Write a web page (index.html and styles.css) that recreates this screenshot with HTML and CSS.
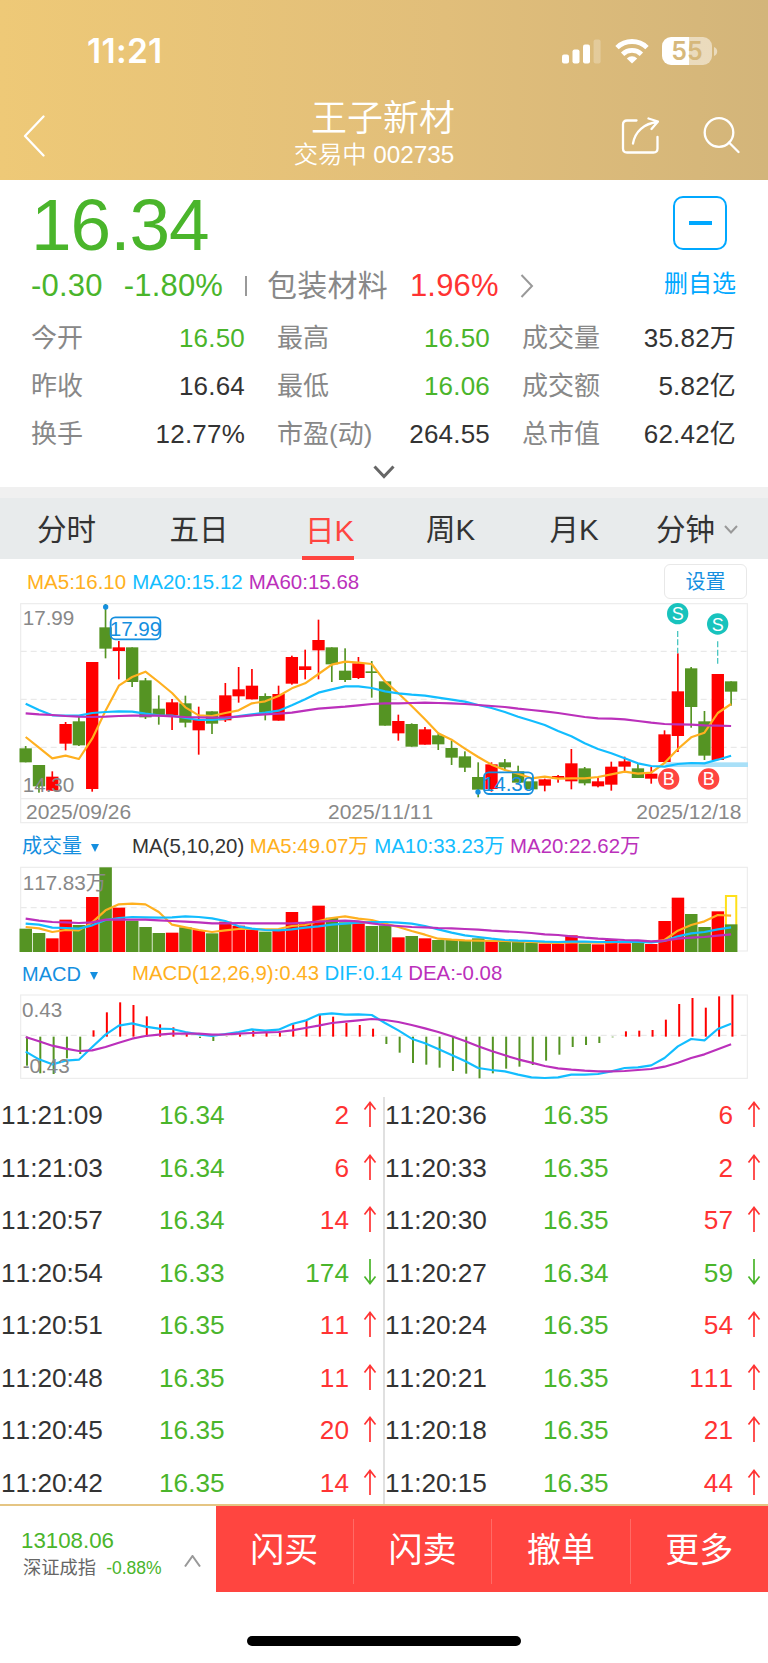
FILE: index.html
```html
<!DOCTYPE html>
<html lang="zh-CN">
<head>
  <meta charset="UTF-8">
  <meta name="viewport" content="width=device-width, initial-scale=1.0">
  <title>王子新材 002735</title>
  <link rel="stylesheet" href="styles.css">
</head>
<body>
  <header class="header">
    <div class="status">
      <span class="status__time">11:21</span>
      <div class="status__icons">
        <svg class="status__signal" width="40" height="25" viewBox="0 0 40 25" fill="#fff">
          <rect x="0" y="15.5" width="7" height="9" rx="2"/>
          <rect x="10.5" y="10.5" width="7" height="14" rx="2"/>
          <rect x="21" y="5.5" width="7" height="19" rx="2"/>
          <rect x="31.6" y="0.5" width="7" height="24" rx="2" opacity="0.25"/>
        </svg>
        <svg class="status__wifi" width="34" height="25" viewBox="0 0 34 25" fill="none" stroke="#fff" stroke-width="4.8">
          <path d="M2 8.6a21.5 21.5 0 0 1 30 0"/>
          <path d="M7.6 15.2a13.600 13.600 0 0 1 18.800 0"/>
          <path d="M17 24.600l-5.200-5.200a7.600 7.600 0 0 1 10.400 0z" fill="#fff" stroke="none"/>
        </svg>
        <div class="battery"><span>55</span></div>
        <svg class="battery-cap" width="4" height="9" viewBox="0 0 4 9"><path d="M0 0q3.200 1.200 3.200 4.500T0 9z" fill="#fff" opacity="0.5"/></svg>
      </div>
    </div>
    <nav class="nav">
      <svg class="nav__back" width="22" height="42" viewBox="0 0 22 42"><path d="M20.500 1.500L2 21l18.500 19.500"/></svg>
      <div class="nav__title">
        <h1>王子新材</h1>
        <p>交易中 002735</p>
      </div>
      <div class="nav__actions">
        <svg width="38" height="38" viewBox="0 0 38 38">
          <path d="M15.500 4.500H6Q2 4.500 2 8.500v24Q2 36.500 6 36.500h26.500Q36.500 36.500 36.500 32.500V21"/>
          <path d="M12 27.500C14 15.500 23 7.500 36.500 6M27.500 2.500l9.500 3L30.500 13"/>
        </svg>
        <svg width="38" height="38" viewBox="0 0 38 38">
          <circle cx="17" cy="16.500" r="14.300"/>
          <path d="M27 26.500l9.500 9.500"/>
        </svg>
      </div>
    </nav>
  </header>

  <section class="quote">
    <div class="quote__top">
      <div class="quote__main">
        <div class="quote__price">16.34</div>
        <div class="quote__change">
          <span class="green">-0.30</span>
          <span class="green quote__percent">-1.80%</span>
          <i class="quote__divider"></i>
          <span class="quote__sector">包装材料</span>
          <span class="red">1.96%</span>
          <svg width="14" height="24" viewBox="0 0 14 24"><path d="M1.500 1L12 12 1.500 23"/></svg>
        </div>
      </div>
      <div class="quote__remove">
        <div class="quote__minus"></div>
        <span>删自选</span>
      </div>
    </div>
    <div class="stats">
      <div class="stat"><span>今开</span><b class="green">16.50</b></div>
      <div class="stat"><span>最高</span><b class="green">16.50</b></div>
      <div class="stat"><span>成交量</span><b>35.82万</b></div>
      <div class="stat"><span>昨收</span><b>16.64</b></div>
      <div class="stat"><span>最低</span><b class="green">16.06</b></div>
      <div class="stat"><span>成交额</span><b>5.82亿</b></div>
      <div class="stat"><span>换手</span><b>12.77%</b></div>
      <div class="stat"><span>市盈(动)</span><b>264.55</b></div>
      <div class="stat"><span>总市值</span><b>62.42亿</b></div>
    </div>
    <svg class="quote__more" width="22" height="14" viewBox="0 0 22 14"><path d="M1.500 1.500L11 11.500l9.500-10"/></svg>
  </section>

  <div class="tabs">
    <div class="tab"><span>分时</span></div>
    <div class="tab"><span>五日</span></div>
    <div class="tab tab--active"><span>日K</span></div>
    <div class="tab"><span>周K</span></div>
    <div class="tab"><span>月K</span></div>
    <div class="tab"><span>分钟</span><svg width="14" height="9" viewBox="0 0 14 9"><path d="M1 1l6 6.500L13 1"/></svg></div>
  </div>

  <section class="charts">
    <div class="legend legend--price">
      <span class="ma-a">MA5:16.10</span>
      <span class="ma-b">MA20:15.12</span>
      <span class="ma-c">MA60:15.68</span>
      <button class="settings">设置</button>
    </div>
    <svg class="chart" id="price" width="728" height="220" viewBox="60 39 2184 660"></svg>

    <div class="legend legend--volume">
      <span class="legend__name">成交量<i></i></span>
      <span>MA(5,10,20)</span>
      <span class="ma-a">MA5:49.07万</span>
      <span class="ma-b">MA10:33.23万</span>
      <span class="ma-c">MA20:22.62万</span>
    </div>
    <svg class="chart" id="volume" width="728" height="86" viewBox="60 126 2184 258"></svg>

    <div class="legend legend--macd">
      <span class="legend__name">MACD<i></i></span>
      <span class="ma-a">MACD(12,26,9):0.43</span>
      <span class="ma-b">DIF:0.14</span>
      <span class="ma-c">DEA:-0.08</span>
    </div>
    <svg class="chart" id="macd" width="728" height="84" viewBox="60 510 2184 252"></svg>
  </section>

  <section class="ticks">
    <ul class="ticks__col" id="ticks-left"></ul>
    <ul class="ticks__col" id="ticks-right"></ul>
  </section>

  <footer class="footer">
    <div class="index">
      <div class="index__value green">13108.06</div>
      <div class="index__row">
        <span>深证成指</span>
        <span class="green index__percent">-0.88%</span>
      </div>
      <svg class="index__up" width="17" height="12" viewBox="0 0 17 12"><path d="M1 11.500L8.500 1 16 11.500"/></svg>
    </div>
    <div class="actions">
      <button>闪买</button>
      <button>闪卖</button>
      <button>撤单</button>
      <button>更多</button>
    </div>
  </footer>
  <div class="home-bar"></div>

  <script src="script.js"></script>
</body>
</html>
```

FILE: styles.css
```css
*,
*::after,
*::before {
  padding: 0;
  margin: 0;
  box-sizing: border-box;
}

:root {
  --green: #4ab52b;
  --red: #ff3333;
  --action: #ff4540;
  --blue: #00a8ff;
  --link: #158fdf;
  --text: #333;
  --muted: #888;
  --ma-a: #ffb020;
  --ma-b: #12bdff;
  --ma-c: #bb30bb;
}

body {
  width: 768px;
  height: 1663px;
  overflow: hidden;
  background-color: #fff;
  color: var(--text);
  font-family: "Liberation Sans", "Noto Sans CJK SC", sans-serif;
  font-kerning: none;
  line-height: 1.15;
}

svg {
  display: block;
  flex: none;
}

button {
  border: 0;
  background: none;
  font-family: inherit;
}

.green {
  color: var(--green);
}

.red {
  color: var(--red);
}

/* header */

.header {
  height: 180px;
  color: #fff;
  background-image: linear-gradient(to right, #eec977, #e1be7a 58%, #d3b57a);
}

.status {
  display: flex;
  justify-content: space-between;
  height: 90px;
  padding: 33px 50px 0 87px;
}

.status__time {
  font: 600 33.5px/37px Inter, sans-serif;
  letter-spacing: 0.3px;
}

.status__icons {
  display: flex;
  height: 36px;
  align-items: center;
}

.status__wifi {
  margin: 0 13px 0 13px;
}

.battery {
  width: 50px;
  height: 28px;
  border-radius: 9px;
  background-image: linear-gradient(to right, #fff 54%, rgba(255, 255, 255, 0.5) 54%);
  text-align: center;
}

.battery span {
  color: #d6b87b;
  font: 600 25px/28px Inter, sans-serif;
}

.battery-cap {
  margin-left: 2px;
}

.nav {
  display: grid;
  grid-template-columns: 200px 1fr 200px;
  height: 90px;
}

.nav svg {
  fill: none;
  stroke: #fff;
  stroke-width: 2.3;
  stroke-linecap: round;
  stroke-linejoin: round;
}

.nav__back {
  margin: 25px 0 0 23px;
}

.nav__title {
  padding-top: 6px;
  text-align: center;
}

.nav__title h1 {
  margin-left: -2px;
  font-size: 36px;
  font-weight: 350;
  line-height: 46px;
}

.nav__title p {
  margin-left: -20px;
  font-size: 24.3px;
  font-weight: 350;
  line-height: 26px;
}

.nav__actions {
  display: flex;
  justify-content: flex-end;
  gap: 43px;
  padding: 26px 28px 0 0;
}

/* quote */

.quote {
  height: 307px;
}

.quote__top {
  display: flex;
  justify-content: space-between;
  height: 134px;
  padding-left: 31px;
}

.quote__price {
  height: 82px;
  padding-top: 4px;
  color: var(--green);
  font-size: 73px;
  line-height: 82px;
  letter-spacing: -1px;
}

.quote__change {
  display: flex;
  align-items: center;
  height: 48px;
  font-size: 31px;
  letter-spacing: 0.2px;
}

.quote__percent {
  margin-left: 21px;
}

.quote__divider {
  width: 2px;
  height: 20px;
  margin: 0 20px 0 22px;
  background-color: #999;
}

.quote__sector {
  margin-right: 22px;
  color: var(--muted);
  font-size: 30px;
}

.quote__change svg {
  margin-left: 21px;
  fill: none;
  stroke: #999;
  stroke-width: 2;
}

.quote__remove {
  width: 136px;
  padding-top: 16px;
  color: var(--blue);
  text-align: center;
  font-size: 24px;
}

.quote__minus {
  display: flex;
  align-items: center;
  justify-content: center;
  width: 54px;
  height: 54px;
  margin: 0 auto 19px;
  border: 2px solid var(--blue);
  border-radius: 10px;
}

.quote__minus::after {
  content: "";
  width: 23px;
  height: 4px;
  background-color: var(--blue);
}

.quote__remove span {
  display: block;
  line-height: 30px;
}

.stats {
  display: grid;
  grid-template-columns: 214px 213px 214px;
  grid-auto-rows: 47.8px;
  column-gap: 32px;
  padding: 1px 0 0 31px;
}

.stat {
  display: flex;
  align-items: center;
  justify-content: space-between;
  font-size: 26px;
}

.stat span {
  color: var(--muted);
}

.stat b {
  font-weight: 400;
  letter-spacing: 0.2px;
}

.quote__more {
  margin: 7px auto 0;
  fill: none;
  stroke: #666;
  stroke-width: 3;
}

/* tabs */

.tabs {
  display: grid;
  grid-template-columns: 133px 132px 126px 119px 128px 118px;
  height: 72px;
  border-top: 11px solid #f0f0f0;
  background-color: #e8ebec;
}

.tab {
  display: flex;
  align-items: center;
  justify-content: center;
  gap: 9px;
  font-size: 29.5px;
}

.tab span {
  line-height: 63px;
}

.tab svg {
  fill: none;
  stroke: #999;
  stroke-width: 2;
}

.tab--active {
  color: var(--action);
}

.tab--active span {
  height: 61px;
  padding: 0 0 0 3px;
  line-height: 63px;
  border-bottom: 4px solid var(--action);
}

/* charts */

.charts {
  padding-left: 20px;
}

.legend {
  display: flex;
  align-items: center;
  gap: 5.5px;
  font-size: 20.4px;
}

.legend--price {
  height: 44px;
  padding-top: 1px;
  padding-left: 7px;
  font-size: 20.5px;
  gap: 6px;
}

.legend--volume {
  height: 44px;
  padding-top: 3px;
}

.legend--macd {
  height: 42px;
}

.legend__name {
  display: flex;
  align-items: center;
  gap: 9px;
  width: 106.5px;
  padding-left: 2px;
  color: var(--link);
  font-size: 20px;
}

.legend__name i {
  margin-top: 3px;
  border: solid transparent;
  border-width: 8px 4px 0;
  border-top-color: var(--link);
}

.ma-a {
  color: var(--ma-a);
}

.ma-b {
  color: var(--ma-b);
}

.ma-c {
  color: var(--ma-c);
}

.settings {
  width: 83px;
  height: 35px;
  margin: 0 21px 0 auto;
  border: 1px solid #e8e8e8;
  border-radius: 6px;
  color: var(--link);
  font-size: 20px;
  line-height: 35px;
}

.chart {
  overflow: visible;
}

.chart .frame {
  fill: none;
  stroke: #ececec;
  stroke-width: 3.5;
}

.chart .grid {
  stroke: #e9e9e9;
  stroke-width: 3.5;
  stroke-dasharray: 18 12;
}

.chart .up {
  fill: #ff0000;
}

.chart .down {
  fill: #559423;
}

.chart polyline {
  fill: none;
  stroke-width: 6.5;
  stroke-linejoin: round;
}

.chart .line-a {
  stroke: var(--ma-a);
}

.chart .line-b {
  stroke: var(--ma-b);
}

.chart .line-c {
  stroke: var(--ma-c);
}

.chart text {
  fill: var(--muted);
  font-size: 62px;
}

.chart .date {
  font-size: 63px;
}

.chart .flag {
  fill: none;
  stroke: var(--link);
  stroke-width: 5.5;
}

.chart .flag-text {
  fill: var(--link);
}

.chart .dot {
  fill: var(--link);
}

.chart .zone {
  fill: #a9e0f8;
}

.chart .sell {
  fill: #18c3bd;
}

.chart .sell-line {
  stroke: #4cc6c1;
  stroke-width: 4;
  stroke-dasharray: 18 7;
}

.chart .buy {
  fill: var(--action);
}

.chart .mark {
  fill: #fff;
  font-size: 54px;
  text-anchor: middle;
}

.chart .forecast {
  fill: #fff;
  stroke: #ffe01a;
  stroke-width: 6;
}

/* ticks */

.ticks {
  display: flex;
  height: 407px;
  margin-top: 18px;
  overflow: hidden;
}

.ticks__col {
  width: 384px;
  list-style: none;
}

.ticks__col + .ticks__col {
  box-shadow: -1px 0 0 #e0e0e0, inset 1px 0 0 #e0e0e0;
}

.tick {
  display: grid;
  grid-template-columns: 158px 90px 100px 1fr;
  align-items: center;
  height: 52.5px;
  padding-left: 1px;
  font-size: 26.2px;
}

.tick:first-child {
  margin-top: -8px;
}

.tick__amount {
  text-align: right;
}

.tick svg {
  margin: -2px 0 0 14px;
  fill: none;
  stroke: currentColor;
  stroke-width: 1.7;
}

/* footer */

.footer {
  display: flex;
  height: 88px;
  border-top: 2px solid #e5c583;
}

.index {
  display: grid;
  grid-template-columns: 161px 1fr;
  align-content: start;
  width: 215.5px;
  padding: 21px 0 0 21px;
}

.index__value {
  grid-column: 1 / 3;
  font-size: 22.3px;
  line-height: 27px;
}

.index__row {
  display: flex;
  align-items: center;
  gap: 10px;
  height: 28px;
  padding-left: 2px;
  color: #666;
  font-size: 18.3px;
}

.index__percent {
  font-size: 17.5px;
}

.index__up {
  margin: 1px 0 0 2px;
  fill: none;
  stroke: #999;
  stroke-width: 2;
}

.actions {
  display: flex;
  flex: 1;
  padding: 13px 0 8px;
  background-color: var(--action);
}

.actions button {
  flex: 1;
  padding-bottom: 3px;
  color: #fff;
  font-size: 34px;
  line-height: 60px;
}

.actions button + button {
  border-left: 1px solid #ff6b66;
}

.home-bar {
  width: 274px;
  height: 10px;
  margin: 44px auto 0;
  border-radius: 5px;
  background-color: #000;
}
```

FILE: script.js
```js
// all chart values are in @3x canvas units, one entry per trading day
const STEP = 39.93;
const FIRST = 77;
const BAR = 37;

// high, body top, body bottom, low, up (1) / down (0)
const candles = [
  [468, 475, 517, 517, 0], [525, 525, 589, 608, 0], [544, 560, 602, 602, 1], [396, 402, 461, 481, 1],
  [380, 394, 466, 468, 0], [216, 216, 597, 605, 1], [42, 112, 176, 205, 0], [153, 172, 183, 268, 1],
  [172, 172, 276, 291, 0], [264, 271, 382, 387, 0], [316, 356, 376, 404, 0], [327, 337, 376, 420, 1],
  [317, 340, 398, 412, 0], [350, 390, 421, 494, 1], [364, 364, 401, 432, 0], [279, 316, 391, 396, 1],
  [231, 298, 319, 338, 1], [237, 287, 328, 328, 1], [310, 318, 368, 391, 0], [287, 312, 392, 392, 1],
  [197, 201, 281, 284, 1], [179, 229, 240, 268, 1], [89, 150, 181, 268, 1], [172, 172, 223, 276, 0],
  [175, 242, 270, 276, 0], [201, 220, 264, 267, 1], [213, 244, 249, 323, 0], [274, 274, 407, 407, 0],
  [374, 393, 430, 452, 1], [400, 402, 470, 470, 0], [411, 418, 464, 464, 1], [428, 436, 463, 480, 0],
  [452, 474, 503, 525, 0], [484, 499, 533, 546, 0], [517, 561, 599, 622, 0], [517, 523, 597, 605, 1],
  [507, 517, 532, 542, 0], [527, 544, 578, 578, 0], [574, 574, 598, 598, 0], [566, 568, 587, 604, 1],
  [555, 558, 567, 578, 1], [477, 520, 574, 598, 1], [531, 535, 580, 586, 0], [562, 574, 589, 592, 1],
  [515, 530, 584, 602, 1], [500, 514, 530, 544, 1], [520, 535, 564, 564, 0], [531, 551, 566, 581, 1],
  [421, 433, 516, 516, 1], [190, 304, 438, 486, 1], [231, 235, 351, 413, 0], [363, 394, 497, 510, 0],
  [252, 252, 510, 510, 1], [274, 274, 305, 347, 0]
];

const priceLines = {
  a: [441, 473, 505, 497, 507, 446, 362, 287, 261, 245, 276, 309, 352, 376, 378, 369, 361, 340, 334, 318, 295, 280, 252, 224, 215, 218, 222, 274, 310, 348, 388, 430, 449, 476, 501, 524, 540, 551, 565, 560, 566, 565, 565, 561, 553, 545, 551, 548, 519, 477, 442, 428, 369, 342],
  b: [341, 360, 376, 377, 377, 369, 366, 364, 365, 371, 376, 377, 384, 390, 390, 386, 378, 373, 368, 362, 346, 328, 308, 298, 289, 289, 294, 304, 310, 314, 317, 323, 329, 335, 345, 354, 366, 380, 392, 405, 423, 439, 460, 477, 490, 505, 520, 528, 530, 522, 519, 520, 509, 497],
  c: [370, 373, 375, 378, 380, 381, 380, 378, 377, 377, 377, 379, 381, 382, 383, 382, 380, 376, 373, 371, 368, 362, 356, 353, 350, 346, 342, 340, 340, 339, 338, 339, 340, 342, 345, 348, 351, 356, 360, 364, 369, 375, 381, 385, 386, 388, 393, 398, 402, 403, 404, 406, 407, 408]
};

const volumes = [311, 324, 340, 284, 300, 216, 127, 248, 287, 306, 324, 323, 307, 315, 325, 290, 302, 314, 320, 317, 261, 291, 242, 278, 292, 295, 303, 301, 337, 333, 340, 345, 344, 345, 340, 348, 348, 350, 354, 356, 357, 331, 356, 358, 345, 355, 354, 357, 288, 218, 267, 306, 259, 298];

const volumeLines = {
  a: [306, 310, 321, 315, 316, 292, 256, 238, 236, 238, 261, 299, 307, 315, 321, 316, 312, 312, 313, 312, 303, 300, 288, 279, 274, 281, 285, 296, 306, 318, 329, 341, 344, 346, 347, 348, 348, 349, 351, 353, 354, 352, 352, 353, 352, 350, 350, 351, 345, 317, 300, 289, 270, 272],
  b: [296, 299, 308, 309, 311, 301, 285, 279, 276, 277, 278, 277, 274, 276, 280, 288, 304, 311, 315, 316, 313, 308, 304, 299, 296, 293, 291, 291, 293, 296, 303, 313, 323, 331, 336, 341, 345, 347, 348, 350, 351, 350, 350, 351, 351, 351, 351, 352, 348, 334, 325, 321, 313, 307],
  c: [281, 287, 291, 292, 294, 292, 284, 284, 284, 284, 286, 288, 290, 292, 295, 295, 294, 295, 295, 295, 295, 293, 290, 288, 287, 289, 295, 300, 303, 306, 307, 309, 310, 312, 314, 317, 319, 321, 324, 328, 330, 334, 338, 341, 343, 345, 346, 349, 347, 341, 338, 336, 332, 328]
};

const histogram = [722, 745, 747, 700, 687, 616, 562, 532, 540, 574, 598, 607, 627, 639, 648, 636, 628, 616, 622, 622, 598, 588, 570, 575, 594, 600, 611, 657, 683, 714, 719, 728, 738, 746, 760, 745, 731, 725, 720, 707, 689, 666, 660, 654, 637, 619, 617, 615, 584, 537, 519, 548, 514, 509];

const macdLines = {
  b: [680, 703, 718, 707, 704, 666, 629, 602, 595, 605, 611, 612, 621, 628, 633, 627, 621, 613, 617, 614, 597, 587, 569, 565, 569, 568, 570, 594, 616, 641, 655, 672, 690, 708, 729, 735, 739, 749, 757, 759, 757, 749, 749, 747, 739, 729, 727, 721, 699, 664, 642, 646, 612, 596],
  c: [636, 649, 662, 671, 678, 676, 666, 653, 641, 633, 629, 626, 626, 626, 629, 628, 626, 624, 622, 621, 616, 609, 602, 594, 590, 586, 582, 585, 591, 600, 610, 621, 634, 648, 664, 678, 691, 703, 713, 723, 730, 734, 737, 739, 739, 738, 735, 732, 725, 713, 699, 688, 673, 658]
};

// time, price, amount, direction
const ticksLeft = [
  ['11:21:09', '16.34', 2, 'up'], ['11:21:03', '16.34', 6, 'up'], ['11:20:57', '16.34', 14, 'up'], ['11:20:54', '16.33', 174, 'down'],
  ['11:20:51', '16.35', 11, 'up'], ['11:20:48', '16.35', 11, 'up'], ['11:20:45', '16.35', 20, 'up'], ['11:20:42', '16.35', 14, 'up']
];
const ticksRight = [
  ['11:20:36', '16.35', 6, 'up'], ['11:20:33', '16.35', 2, 'up'], ['11:20:30', '16.35', 57, 'up'], ['11:20:27', '16.34', 59, 'down'],
  ['11:20:24', '16.35', 54, 'up'], ['11:20:21', '16.35', 111, 'up'], ['11:20:18', '16.35', 21, 'up'], ['11:20:15', '16.35', 44, 'up']
];

const x = (i) => FIRST + i * STEP;
const rect = (cls, left, top, w, h) => `<rect class="${cls}" x="${left.toFixed(1)}" y="${top}" width="${w}" height="${h}"/>`;
const hline = (cls, y) => `<line class="${cls}" x1="62" y1="${y}" x2="2242" y2="${y}"/>`;
const lines = (set) => Object.keys(set).map((key) =>
  `<polyline class="line-${key}" points="${set[key].map((y, i) => x(i).toFixed(1) + ',' + y).join(' ')}"/>`).join('');
const color = (i) => candles[i][4] ? 'up' : 'down';

function drawPrice() {
  let out = rect('frame', 62, 41, 2180, 657) + hline('frame', 626);
  out += [184, 328, 472].map((y) => hline('grid', y)).join('');
  out += rect('zone', 1996, 517, 248, 14);
  candles.forEach(([high, top, bottom, low], i) => {
    out += rect(color(i), x(i) - 2.5, high, 5, low - high);
    out += rect(color(i), x(i) - BAR / 2, top, BAR, bottom - top);
  });
  out += lines(priceLines);
  out += '<text x="68" y="105">17.99</text><text x="68" y="607">14.30</text>';
  out += '<text class="date" x="78" y="686">2025/09/26</text><text class="date" x="984" y="686">2025/11/11</text><text class="date" x="2224" y="686" text-anchor="end">2025/12/18</text>';
  out += '<circle class="dot" cx="317" cy="51" r="8"/><circle class="dot" cx="1434" cy="606" r="8"/>';
  out += '<rect class="flag" x="332" y="82" width="149" height="66" rx="14"/><text class="flag-text" x="329" y="138">17.99</text>';
  out += '<rect class="flag" x="1452" y="547" width="147" height="65" rx="14"/><text class="flag-text" x="1448" y="603">14.30</text>';
  [[2033, 71], [2153, 102]].forEach(([cx, cy]) => {
    out += `<line class="sell-line" x1="${cx}" y1="${cy + 52}" x2="${cx}" y2="${cy + 119}"/>`;
    out += `<circle class="sell" cx="${cx}" cy="${cy}" r="32"/><text class="mark" x="${cx}" y="${cy + 20}">S</text>`;
  });
  [2006, 2126].forEach((cx) => {
    out += `<circle class="buy" cx="${cx}" cy="567" r="32"/><text class="mark" x="${cx}" y="586">B</text>`;
  });
  document.getElementById('price').innerHTML = out;
}

function drawVolume() {
  let out = rect('frame', 62, 127, 2180, 251) + hline('grid', 248);
  out += rect('forecast', x(53) - 15.5, 213, 31, 100);
  volumes.forEach((top, i) => {
    out += rect(color(i), x(i) - BAR / 2, top, BAR + 0.5, 381 - top);
  });
  out += lines(volumeLines) + '<text x="68" y="195">117.83万</text>';
  document.getElementById('volume').innerHTML = out;
}

function drawMacd() {
  const zero = 635;
  let out = rect('frame', 62, 510, 2180, 250) + hline('grid', 631);
  histogram.forEach((y, i) => {
    out += rect(y < zero ? 'up' : 'down', x(i) + 1, Math.min(y, zero), 6, Math.abs(y - zero));
  });
  out += lines(macdLines) + '<text x="66" y="577">0.43</text><text x="68" y="743">-0.43</text>';
  document.getElementById('macd').innerHTML = out;
}

function drawTicks(id, rows) {
  document.getElementById(id).innerHTML = rows.map(([time, price, amount, dir]) => {
    const cls = dir === 'up' ? 'red' : 'green';
    const arrow = dir === 'up' ? 'M7 26V1.5M1.5 8.5L7 1.5l5.5 7' : 'M7 0v24.5M1.5 17.5l5.5 7 5.5-7';
    return `<li class="tick"><span>${time}</span><span class="green">${price}</span>` +
      `<span class="tick__amount ${cls}">${amount}</span>` +
      `<svg class="${cls}" width="14" height="26" viewBox="0 0 14 26"><path d="${arrow}"/></svg></li>`;
  }).join('');
}

drawPrice();
drawVolume();
drawMacd();
drawTicks('ticks-left', ticksLeft);
drawTicks('ticks-right', ticksRight);
```
